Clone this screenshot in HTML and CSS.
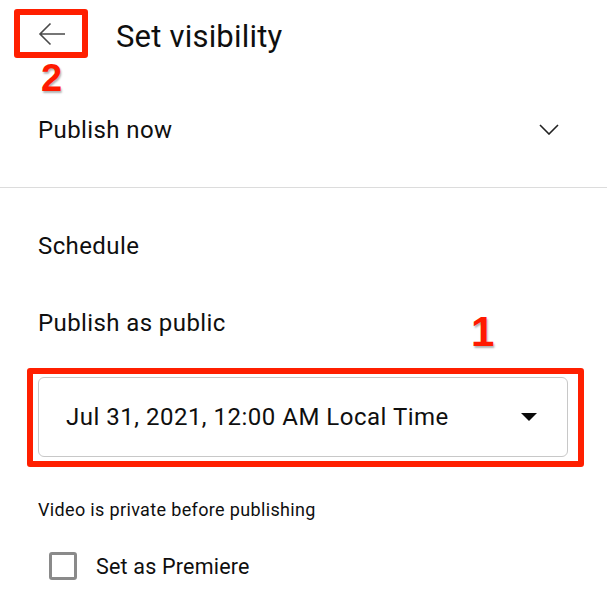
FILE: index.html
```html
<!DOCTYPE html>
<html>
<head>
<meta charset="utf-8">
<link rel="stylesheet" href="styles.css">
</head>
<body>
<div class="page">
  <header class="header">
    <div class="back">
      <svg class="back-icon" width="28" height="24" viewBox="0 0 28 24"><path d="M27 12H2M12.5 1.5L2 12l10.5 10.5" fill="none" stroke="#4a4a4a" stroke-width="1.6"/></svg>
      <span class="mark mark-back"></span>
      <span class="num num-2">2</span>
    </div>
    <h1 class="title">Set visibility</h1>
  </header>

  <div class="row publish-now">
    <span>Publish now</span>
    <svg class="chev" width="20" height="11" viewBox="0 0 20 11"><path d="M1 1l9 9 9-9" fill="none" stroke="#222" stroke-width="1.6"/></svg>
  </div>
  <div class="divider"></div>

  <section class="schedule">
    <div class="label">Schedule</div>
    <div class="label sub">Publish as public <span class="num num-1">1</span></div>
    <div class="field-wrap">
      <div class="field">
        <span>Jul 31, 2021, 12:00 AM Local Time</span>
        <span class="caret"></span>
      </div>
      <span class="mark mark-field"></span>
    </div>
    <p class="note">Video is private before publishing</p>
    <label class="check">
      <span class="box"></span>
      <span>Set as Premiere</span>
    </label>
  </section>
</div>
</body>
</html>
```

FILE: styles.css
```css
* { box-sizing: border-box; }
html, body { margin: 0; padding: 0; background: #fff; }
body {
  font-family: Roboto, "Noto Sans", Arial, sans-serif;
  color: #0f0f0f;
  width: 607px;
  height: 600px;
  overflow: hidden;
}
.header {
  height: 72px;
  display: flex;
  align-items: center;
}
.back {
  position: relative;
  width: 116px;
  height: 72px;
  flex: none;
}
.back-icon {
  position: absolute;
  left: 38px;
  top: 22px;
}
.title {
  margin: 0;
  font-size: 31px;
  font-weight: 400;
  letter-spacing: 0.2px;
}
.mark {
  position: absolute;
  border: 6px solid #ff1f00;
  border-radius: 3px;
  pointer-events: none;
}
.mark-back {
  left: 14px;
  top: 9px;
  width: 74px;
  height: 49px;
}
.num {
  position: absolute;
  font-family: "Liberation Sans", Arial, sans-serif;
  font-weight: 700;
  color: #ff1a00;
  -webkit-text-stroke: 5px #fff;
  paint-order: stroke fill;
  text-shadow: 1px 2px 2px rgba(0,0,0,0.3);
  line-height: 1;
  letter-spacing: 0;
}
.num-2 {
  left: 41px;
  top: 59px;
  font-size: 38px;
}
.num-1 {
  left: 433px;
  top: 2px;
  font-size: 42px;
}
.row {
  display: flex;
  align-items: center;
  justify-content: space-between;
}
.publish-now {
  height: 115px;
  padding: 0 48px 0 38px;
  font-size: 24px;
  letter-spacing: 0.4px;
}
.chev { display: block; }
.divider {
  height: 1px;
  background: #dcdcdc;
}
.schedule {
  padding: 44px 39px 0 38px;
}
.label {
  position: relative;
  font-size: 24px;
  line-height: 28px;
  letter-spacing: 0.4px;
}
.label.sub {
  margin-top: 49px;
}
.field-wrap {
  position: relative;
  margin-top: 40px;
}
.field {
  height: 80px;
  border: 1px solid #c8c8c8;
  border-radius: 6px;
  display: flex;
  align-items: center;
  justify-content: space-between;
  padding: 0 30px 0 27px;
  font-size: 24px;
  letter-spacing: 0.5px;
}
.caret {
  width: 0;
  height: 0;
  border-left: 8px solid transparent;
  border-right: 8px solid transparent;
  border-top: 8px solid #0a0a0a;
}
.mark-field {
  left: -11px;
  right: -16px;
  top: -9px;
  bottom: -10px;
}
.note {
  margin: 42px 0 0;
  font-size: 18px;
  line-height: 22px;
  letter-spacing: 0.35px;
}
.check {
  display: flex;
  align-items: center;
  margin-top: 31px;
  margin-left: 11px;
  font-size: 21.5px;
  letter-spacing: 0.2px;
}
.box {
  width: 28px;
  height: 28px;
  border: 3px solid #8a8a8a;
  border-radius: 3px;
  margin-right: 19px;
}
```
